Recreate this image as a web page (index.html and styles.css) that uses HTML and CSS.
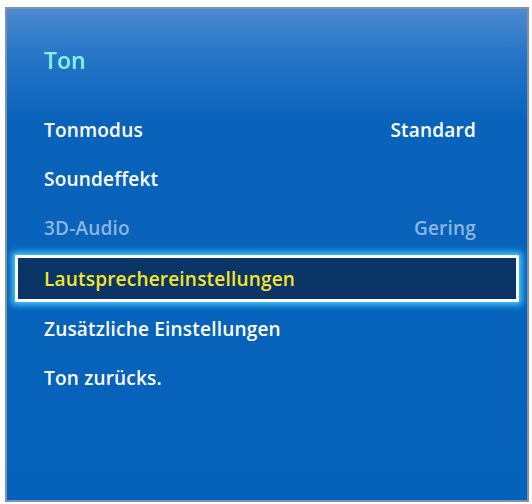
FILE: index.html
```html
<!DOCTYPE html>
<html lang="de">
<head>
    <meta charset="UTF-8">
    <title>Ton</title>
    <link rel="stylesheet" href="styles.css">
</head>
<body>
    <div id="panel">
        <div class="title">Ton</div>
        <div id="menu">
            <div class="item"><span>Tonmodus</span><span>Standard</span></div>
            <div class="item"><span>Soundeffekt</span></div>
            <div class="item dim"><span>3D-Audio</span><span>Gering</span></div>
            <div class="item selected"><span>Lautsprechereinstellungen</span></div>
            <div class="item"><span>Zusätzliche Einstellungen</span></div>
            <div class="item"><span>Ton zurücks.</span></div>
        </div>
    </div>
</body>
</html>
```

FILE: styles.css
```css
body{
    margin: 0;
    background-color: white;
    font-family: "Open Sans", "Noto Sans", sans-serif;
}
#panel{
    box-sizing: border-box;
    margin: 7px 3px 0 5px;
    height: 495px;
    border: 2px solid #7d93ad;
    background: linear-gradient(to bottom, #4b8ad0 0px, #2474c6 50px, #0a63bb 110px, #0562ba 100%);
    padding-top: 35px;
}
.title{
    color: #86f2e6;
    font-size: 23px;
    font-weight: 600;
    line-height: 32px;
    padding-left: 37px;
}
#menu{
    margin-top: 29px;
    display: flex;
    flex-direction: column;
}
.item{
    display: flex;
    justify-content: space-between;
    align-items: center;
    height: 49px;
    padding: 0 51px 0 37px;
    color: white;
    font-size: 19px;
    font-weight: 600;
    letter-spacing: 0.2px;
}
.dim{
    color: #8db5e1;
}
.selected{
    height: 41px;
    margin: 3px 8px 2px 8px;
    padding-left: 26px;
    border: 3px solid white;
    background-color: #0b3566;
    color: #f6e52c;
    box-shadow: 0 0 6px 3px #45c8ff;
}
```
